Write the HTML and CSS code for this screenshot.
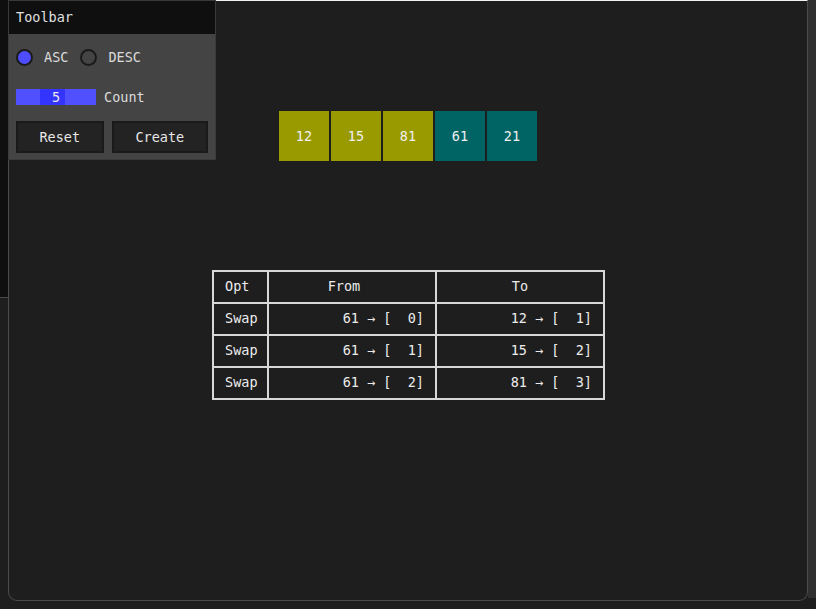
FILE: index.html
```html
<!DOCTYPE html>
<html>
<head>
<meta charset="utf-8">
<link rel="stylesheet" href="styles.css">
</head>
<body>
<div class="screen">
  <div class="left-strip"><div class="left-top"></div></div>
  <div class="main">
    <div class="blocks">
      <div class="block olive">12</div>
      <div class="block olive">15</div>
      <div class="block olive">81</div>
      <div class="block teal">61</div>
      <div class="block teal">21</div>
    </div>
    <table class="ops">
      <colgroup><col class="w-opt"><col class="w-num"><col class="w-num"></colgroup>
      <tr><th class="c-opt">Opt</th><th class="c-num from">From</th><th class="c-num">To</th></tr>
      <tr><td class="c-opt">Swap</td><td class="c-num">61 → [  0]</td><td class="c-num">12 → [  1]</td></tr>
      <tr><td class="c-opt">Swap</td><td class="c-num">61 → [  1]</td><td class="c-num">15 → [  2]</td></tr>
      <tr><td class="c-opt">Swap</td><td class="c-num">61 → [  2]</td><td class="c-num">81 → [  3]</td></tr>
    </table>
  </div>
  <div class="right-strip"></div>

  <div class="toolbar">
    <div class="tb-title">Toolbar</div>
    <div class="tb-body">
      <div class="tb-row radios">
        <span class="radio on"></span><span class="lbl">ASC</span>
        <span class="radio"></span><span class="lbl">DESC</span>
      </div>
      <div class="tb-row">
        <div class="slider"><div class="knob"></div><span class="val">5</span></div>
        <span class="lbl">Count</span>
      </div>
      <div class="tb-row buttons">
        <button class="btn reset">Reset</button>
        <button class="btn create">Create</button>
      </div>
    </div>
  </div>
</div>
</body>
</html>
```
FILE: styles.css
```css
* { box-sizing: border-box; }
html, body { margin: 0; padding: 0; }
body {
  background: #1e1e1e;
  font-family: "DejaVu Sans Mono", "Liberation Mono", monospace;
  font-size: 13.5px;
  color: #e6e6e6;
  width: 816px;
  height: 609px;
  overflow: hidden;
}
.screen {
  position: relative;
  display: flex;
  width: 816px;
  height: 609px;
}
.left-strip {
  width: 8px;
  flex: none;
}
.left-top {
  height: 298px;
  background: #0f0f0f;
  border-bottom: 1px solid #4a4a4a;
}
.main {
  width: 800px;
  height: 601px;
  flex: none;
  background: #1e1e1e;
  border-top: 1px solid #f2f2f2;
  border-left: 1px solid #4b4b4b;
  border-right: 1px solid #4b4b4b;
  border-bottom: 1px solid #4b4b4b;
  border-radius: 0 0 9px 9px;
  display: flex;
  flex-direction: column;
  align-items: flex-start;
}
.right-strip {
  width: 8px;
  height: 598px;
  flex: none;
  background: #303030;
}
.blocks {
  display: flex;
  gap: 2px;
  margin-top: 110px;
  margin-left: 270px;
}
.block {
  width: 50px;
  height: 50px;
  display: flex;
  align-items: center;
  justify-content: center;
  color: #f0f0f0;
}
.olive { background: #999900; }
.teal { background: #006464; }
.ops {
  margin-top: 109px;
  margin-left: 203px;
  border-collapse: collapse;
  table-layout: fixed;
  width: 391px;
  border: 2px solid #d8d8d8;
}
.w-opt { width: 55px; }
.w-num { width: 168px; }
.ops th, .ops td {
  border: 2px solid #d8d8d8;
  height: 32px;
  padding: 0 11px 2px 11px;
  font-weight: normal;
  white-space: pre;
  color: #ececec;
}
.ops .c-opt { text-align: left; }
.ops td.c-num { text-align: right; }
.ops th.c-num { text-align: center; }
.ops th.from { padding-right: 27px; }

.toolbar {
  position: absolute;
  left: 8px;
  top: 0;
  width: 208px;
  height: 160px;
  border: 1px solid #3a3a3a;
  background: #444444;
}
.tb-title {
  height: 33px;
  background: #0f0f0f;
  padding: 8px 7px;
  color: #e0e0e0;
  line-height: 16px;
}
.tb-body {
  padding: 11px 7px 0 7px;
  display: flex;
  flex-direction: column;
  gap: 16px;
}
.tb-row {
  display: flex;
  align-items: center;
  height: 24px;
}
.radio {
  width: 17px;
  height: 17px;
  border-radius: 50%;
  border: 2px solid #1a1a1a;
  background: #444;
  margin-right: 11px;
}
.radio.on {
  background: #4d4dff;
}
.radios .lbl { margin-right: 12px; color: #dcdcdc; }
.slider {
  position: relative;
  width: 80px;
  height: 16px;
  background: #5050ff;
  display: flex;
  align-items: center;
  justify-content: center;
  margin-right: 8px;
}
.knob {
  position: absolute;
  left: 24px;
  top: 0;
  width: 25px;
  height: 16px;
  background: #3434ff;
}
.val { position: relative; color: #e8e8e8; }
.lbl { color: #dcdcdc; }
.buttons {
  gap: 8px;
  height: 32px;
  margin-top: -4px;
}
.btn {
  font-family: "DejaVu Sans Mono", "Liberation Mono", monospace;
  font-size: 13.5px;
  color: #e6e6e6;
  background: #232323;
  border: 2px solid #1a1a1a;
  height: 32px;
  padding: 0;
}
.reset { width: 88px; }
.create { width: 97px; }
```
